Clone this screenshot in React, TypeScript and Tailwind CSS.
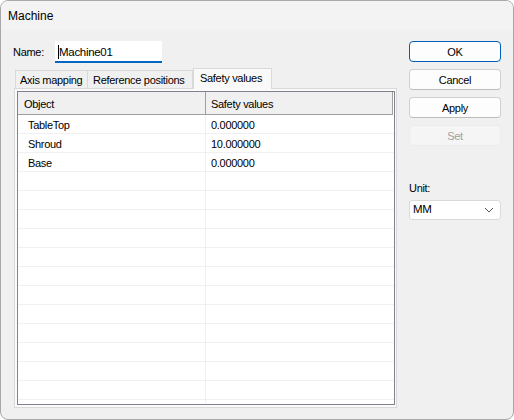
import React from "react";

const ROWS = [
  ["TableTop", "0.000000"],
  ["Shroud", "10.000000"],
  ["Base", "0.000000"],
];

function Button({ label, primary, disabled }: { label: string; primary?: boolean; disabled?: boolean }) {
  let cls = "h-[21px] w-[92px] rounded-[4px] flex items-center justify-center text-[11px] pt-[1px] ";
  if (primary) cls += "border border-[#005fb8] bg-[#fdfdfd] text-black";
  else if (disabled) cls += "border border-[#ececec] bg-[#f5f5f5] text-[#a0a0a0]";
  else cls += "border border-[#d0d0d0] border-b-[#bcbcbc] bg-[#fdfdfd] text-black";
  return <div className={cls}>{label}</div>;
}

export default function App() {
  const empty = Array.from({ length: 13 });
  return (
    <div
      className="w-[514px] h-[420px] overflow-hidden rounded-[8px] border border-[#a8a8a8] bg-[#f0f0f0] text-black flex flex-col tracking-[-0.3px]"
      style={{ fontFamily: '"Liberation Sans", Arial, sans-serif' }}
    >
      <div className="h-[29px] bg-[#f3f3f3] flex items-center pl-[7px] text-[12px] tracking-normal">Machine</div>
      <div className="flex flex-1">
        {/* left column */}
        <div className="flex flex-col pl-[12px] w-[396px]">
          <div className="flex items-center mt-[11px] h-[22px]">
            <span className="text-[11px] w-[42px]">Name:</span>
            <div className="h-[22px] w-[107px] bg-white border-b-2 border-[#0067c0] flex items-center pl-[3px] text-[11.5px] pt-[1px]">
              <span className="border-l border-black leading-[14px]">Machine01</span>
            </div>
          </div>
          {/* tabs */}
          <div className="flex items-end mt-[4px] h-[21px] pl-[2px] text-[11px] whitespace-nowrap">
            <div className="h-[18px] border border-[#d9d9d9] border-b-0 bg-[#f0f0f0] flex items-center pl-[4px] pt-[1px] w-[73px]">Axis mapping</div>
            <div className="h-[18px] border border-[#d9d9d9] border-b-0 border-l-0 bg-[#f0f0f0] flex items-center pl-[5px] pt-[1px] w-[105px]">Reference positions</div>
            <div className="h-[21px] border border-[#d9d9d9] border-b-0 bg-[#f9f9f9] flex items-center pl-[6px] pb-[1px] w-[79px] relative z-10 -mb-[1px]">Safety values</div>
          </div>
          {/* panel */}
          <div className="ml-[1px] w-[383px] h-[320px] border border-[#d9d9d9] bg-[#fbfbfb] p-[2px]">
            <div className="w-[378px] h-[314px] border border-[#82828c] bg-white overflow-hidden text-[11px]">
              <div className="flex h-[23px] bg-[#f0f0f0] border-b border-[#a0a0a0] w-[375px] border-r">
                <div className="w-[188px] border-r border-[#a0a0a0] flex items-center pl-[6px] pt-[2px]">Object</div>
                <div className="flex-1 flex items-center pl-[5px] pt-[2px]">Safety values</div>
              </div>
              {ROWS.map(([a, b]) => (
                <div key={a} className="flex h-[19px] border-b border-[#f0f0f0]">
                  <div className="w-[188px] border-r border-[#f0f0f0] flex items-center pl-[10px] pt-[2px]">{a}</div>
                  <div className="flex-1 flex items-center pl-[5px] pt-[2px]">{b}</div>
                </div>
              ))}
              {empty.map((_, i) => (
                <div key={i} className="flex h-[19px] border-b border-[#f0f0f0]">
                  <div className="w-[188px] border-r border-[#f0f0f0]" />
                  <div className="flex-1" />
                </div>
              ))}
            </div>
          </div>
        </div>
        {/* right column */}
        <div className="flex flex-col ml-[12px] mt-[11px]">
          <div className="flex flex-col gap-[7px]">
            <Button label="OK" primary />
            <Button label="Cancel" />
            <Button label="Apply" />
            <Button label="Set" disabled />
          </div>
          <div className="mt-[34px] text-[11px]">Unit:</div>
          <div className="mt-[3px] h-[20px] w-[92px] bg-white border border-[#dadada] rounded-[3px] flex items-center justify-between pl-[3px] pr-[6px] text-[11.5px] pt-[1px]">
            <span>MM</span>
            <svg width="10" height="6" viewBox="0 0 10 6" fill="none">
              <path d="M1 1 L5 5 L9 1" stroke="#555" strokeWidth="1" />
            </svg>
          </div>
        </div>
      </div>
    </div>
  );
}
